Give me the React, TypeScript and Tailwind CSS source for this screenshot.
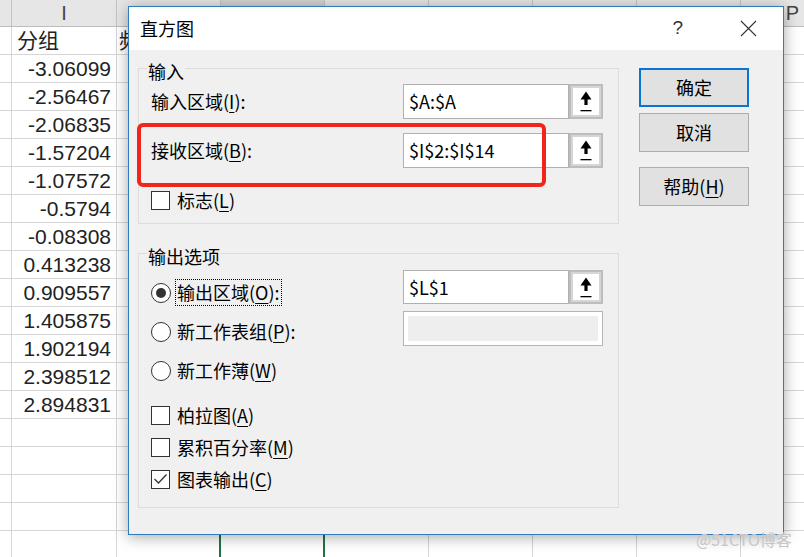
import React from 'react';

const cols = [
  { key: 'H', w: 'w-[12px]' },
  { key: 'I', w: 'w-[105px]' },
  { key: 'J', w: 'w-[104px]' },
  { key: 'K', w: 'w-[104px]' },
  { key: 'L', w: 'w-[104px]' },
  { key: 'M', w: 'w-[104px]' },
  { key: 'N', w: 'w-[104px]' },
  { key: 'O', w: 'w-[104px]' },
  { key: 'P', w: 'w-[104px]' },
];

// only these column letters are not covered by the dialog
const shownHeaders = ['I', 'P'];

const bins = [
  '-3.06099', '-2.56467', '-2.06835', '-1.57204', '-1.07572', '-0.5794', '-0.08308',
  '0.413238', '0.909557', '1.405875', '1.902194', '2.398512', '2.894831',
];

const cjk = "font-['Noto_Sans_CJK_SC',sans-serif]";

function Sheet() {
  const rows = Array.from({ length: 19 }, (_, i) => i);
  return (
    <div className="flex flex-col font-['Liberation_Sans','Noto_Sans_CJK_SC',sans-serif] text-[#222]">
      <div className="flex h-[27px] shrink-0 border-b border-[#bdbdbd] bg-[#e6e6e6]">
        {cols.map((c) => (
          <div
            key={c.key}
            className={`${c.w} shrink-0 border-r border-[#c4c4c4] flex items-center justify-center text-[20px] text-[#444] ${c.key === 'K' ? 'bg-[#d2d2d2]' : ''}`}
          >
            {shownHeaders.includes(c.key) ? c.key : ''}
          </div>
        ))}
      </div>
      {rows.map((r) => (
        <div key={r} className="flex h-[28px] shrink-0">
          {cols.map((c) => {
            let text: React.ReactNode = '';
            let align = 'justify-end';
            if (c.key === 'I') {
              if (r === 0) {
                text = '分组';
                align = 'justify-start';
              } else if (r <= bins.length) text = bins[r - 1];
            }
            if (c.key === 'J' && r === 0) {
              // header of the count column, mostly hidden by the dialog
              text = <span className="block w-[9px] overflow-hidden">频</span>;
              align = 'justify-start';
            }
            const edge =
              c.key === 'J' || c.key === 'K'
                ? 'border-r-2 border-r-[#217346]'
                : 'border-r border-r-[#d6d6d6]';
            return (
              <div
                key={c.key}
                className={`${c.w} shrink-0 border-b border-b-[#d6d6d6] ${edge} flex items-center ${align} ${c.key === 'J' ? 'pl-[2px]' : 'px-[5px]'} text-[21px] whitespace-nowrap overflow-hidden`}
              >
                {text}
              </div>
            );
          })}
        </div>
      ))}
    </div>
  );
}

function U({ children }: { children: React.ReactNode }) {
  return <span className="underline underline-offset-[3px] decoration-1">{children}</span>;
}

function PickButton() {
  return (
    <div className="w-[34px] h-full shrink-0 border-2 border-[#bdbdbd] bg-[#d6d6d6] p-[2px]">
      <div className="w-full h-full bg-white flex items-center justify-center">
        <svg width="12" height="21" viewBox="0 0 12 21">
          <path d="M6 0.5 L11.5 8.5 H7.6 V14 H4.4 V8.5 H0.5 Z" fill="#000" />
          <rect x="0.5" y="19" width="11" height="1.3" fill="#000" />
        </svg>
      </div>
    </div>
  );
}

function RefField({ value }: { value: string }) {
  return (
    <div className="flex h-full w-[200px]">
      <div className="flex-1 border border-[#b0b0b0] bg-white flex items-center px-[5px] text-[18px]">
        {value}
      </div>
      <PickButton />
    </div>
  );
}

function CheckBox({ checked, children }: { checked?: boolean; children: React.ReactNode }) {
  return (
    <div className="flex items-center gap-[7px]">
      <div className="w-[19px] h-[19px] border border-[#333] bg-white flex items-center justify-center">
        {checked && (
          <svg width="15" height="12" viewBox="0 0 15 12">
            <polyline points="1.5,6 5.5,10 13.5,1.5" fill="none" stroke="#333" strokeWidth="1.3" />
          </svg>
        )}
      </div>
      <span className="text-[18px] leading-[19px]">{children}</span>
    </div>
  );
}

function Radio({ on, focused, children }: { on?: boolean; focused?: boolean; children: React.ReactNode }) {
  return (
    <div className="h-[39px] flex items-center gap-[4px]">
      <div className="w-[20px] h-[20px] rounded-full border border-[#333] bg-white flex items-center justify-center">
        {on && <div className="w-[10px] h-[10px] rounded-full bg-[#333]" />}
      </div>
      <span
        className={`border ${focused ? 'border-dotted border-black' : 'border-transparent'} px-[1px] py-[3px] text-[18px] leading-[19px]`}
      >
        {children}
      </span>
    </div>
  );
}

function DlgButton({ primary, children }: { primary?: boolean; children: React.ReactNode }) {
  return (
    <div
      className={`h-[39px] w-[110px] flex items-center justify-center bg-[#e1e1e1] text-[18px] ${primary ? 'border-2 border-[#0a74d2]' : 'border border-[#adadad]'}`}
    >
      {children}
    </div>
  );
}

function Dialog() {
  return (
    <div
      className={`absolute left-[128px] top-[6px] w-[656px] h-[529px] border border-[#2f7bc0] bg-[#f0f0f0] flex flex-col shadow-[0_2px_14px_rgba(0,0,0,0.35)] ${cjk} text-black`}
    >
      {/* title bar */}
      <div className="h-[43px] shrink-0 bg-white flex items-center pl-[11px] pr-[26px]">
        <span className="text-[18px]">直方图</span>
        <span className="ml-auto mr-[57px] text-[19px] text-[#333] font-['Liberation_Sans',sans-serif]">?</span>
        <svg width="17" height="17" viewBox="0 0 17 17">
          <path d="M1 1 L16 16 M16 1 L1 16" stroke="#333" strokeWidth="1.1" />
        </svg>
      </div>

      {/* body */}
      <div className="flex-1 flex pl-[9px] pr-[34px]">
        <div className="w-[481px] shrink-0 flex flex-col">
          <fieldset className="mt-[7px] border border-[#dcdcdc] px-0 pb-[12px]">
            <legend className="ml-[8px] px-[1px] pt-[5px] text-[18px] leading-[18px]">输入</legend>
            <div className="pt-[4px] pl-[12px] flex flex-col">
              <div className="h-[35px] flex items-center">
                <span className="w-[252px] text-[18px]">
                  输入区域(<U>I</U>):
                </span>
                <RefField value="$A:$A" />
              </div>
              <div className="h-[35px] mt-[14px] flex items-center">
                <span className="w-[252px] text-[18px]">
                  接收区域(<U>B</U>):
                </span>
                <RefField value="$I$2:$I$14" />
              </div>
              <div className="h-[22px] mt-[21px] flex items-center">
                <CheckBox>
                  标志(<U>L</U>)
                </CheckBox>
              </div>
            </div>
          </fieldset>

          <fieldset className="mt-[18px] border border-[#dcdcdc] px-0 pb-[12px]">
            <legend className="ml-[8px] px-[1px] pt-[5px] text-[18px] leading-[18px]">输出选项</legend>
            <div className="pl-[12px] pt-[5px] flex">
              <div className="w-[252px] pt-[3px] flex flex-col">
                <Radio on focused>
                  输出区域(<U>O</U>):
                </Radio>
                <Radio>
                  新工作表组(<U>P</U>):
                </Radio>
                <Radio>
                  新工作薄(<U>W</U>)
                </Radio>
              </div>
              <div className="flex flex-col">
                <div className="h-[34px]">
                  <RefField value="$L$1" />
                </div>
                <div className="mt-[7px] h-[35px] w-[200px] border border-[#b4b4b4] bg-white p-[4px]">
                  <div className="w-full h-full bg-[#eeeeee]" />
                </div>
              </div>
            </div>
            <div className="pl-[12px] mt-[9px] flex flex-col">
              <div className="h-[32px] flex items-center">
                <CheckBox>
                  柏拉图(<U>A</U>)
                </CheckBox>
              </div>
              <div className="h-[32px] flex items-center">
                <CheckBox>
                  累积百分率(<U>M</U>)
                </CheckBox>
              </div>
              <div className="h-[32px] flex items-center">
                <CheckBox checked>
                  图表输出(<U>C</U>)
                </CheckBox>
              </div>
            </div>
          </fieldset>
        </div>

        <div className="ml-[20px] pt-[18px] flex flex-col">
          <DlgButton primary>确定</DlgButton>
          <div className="mt-[6px]">
            <DlgButton>取消</DlgButton>
          </div>
          <div className="mt-[15px]">
            <DlgButton>
              帮助(<U>H</U>)
            </DlgButton>
          </div>
        </div>
      </div>

      {/* annotation */}
      <div className="absolute left-[8px] top-[116px] w-[409px] h-[64px] border-[4px] border-[#f0261c] rounded-[6px]" />
    </div>
  );
}

export default function App() {
  return (
    <div className="relative w-[804px] h-[557px] overflow-hidden bg-white">
      <Sheet />
      <Dialog />
      <div className={`absolute left-[696px] top-[527px] text-[16px] text-[#c6c6c6] ${cjk}`}>@51CTO博客</div>
    </div>
  );
}
